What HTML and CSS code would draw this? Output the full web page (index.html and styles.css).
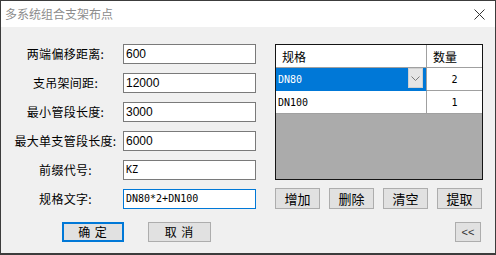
FILE: index.html
```html
<!DOCTYPE html>
<html lang="zh-CN">

<head>
  <meta charset="UTF-8" />
  <title>多系统组合支架布点</title>
  <link rel="stylesheet" href="styles.css">
</head>

<body>
  <div class="janela">
    <div class="titulo">
      <span class="titulo-texto">多系统组合支架布点</span>
      <svg class="fechar" width="11" height="11" viewBox="0 0 11 11">
        <path d="M0.5 0.5 L10.5 10.5 M10.5 0.5 L0.5 10.5" stroke="#333" stroke-width="1" fill="none" />
      </svg>
    </div>

    <div class="conteudo">
      <div class="esquerda">
        <div class="linha">
          <span class="rotulo">两端偏移距离:</span>
          <div class="campo">600</div>
        </div>
        <div class="linha">
          <span class="rotulo">支吊架间距:</span>
          <div class="campo">12000</div>
        </div>
        <div class="linha">
          <span class="rotulo">最小管段长度:</span>
          <div class="campo">3000</div>
        </div>
        <div class="linha">
          <span class="rotulo">最大单支管段长度:</span>
          <div class="campo">6000</div>
        </div>
        <div class="linha">
          <span class="rotulo">前缀代号:</span>
          <div class="campo mono">KZ</div>
        </div>
        <div class="linha">
          <span class="rotulo">规格文字:</span>
          <div class="campo mono ativo">DN80*2+DN100</div>
        </div>

        <div class="acoes">
          <button class="btn padrao">确 定</button>
          <button class="btn">取 消</button>
        </div>
      </div>

      <div class="direita">
        <div class="grade">
          <div class="cab col1">规格</div>
          <div class="cab col2">数量</div>

          <div class="cel col1 selecionada">
            <span>DN80</span>
            <span class="seta">
              <svg width="9" height="5" viewBox="0 0 9 5">
                <path d="M0.5 0.5 L4.5 4.5 L8.5 0.5" stroke="#7a7a7a" stroke-width="1" fill="none" />
              </svg>
            </span>
          </div>
          <div class="cel col2 num">2</div>

          <div class="cel col1">DN100</div>
          <div class="cel col2 num">1</div>

          <div class="vazio"></div>
        </div>

        <div class="botoes">
          <button class="btn">增加</button>
          <button class="btn">删除</button>
          <button class="btn">清空</button>
          <button class="btn">提取</button>
        </div>

        <div class="rodape">
          <button class="btn recolher">&lt;&lt;</button>
        </div>
      </div>
    </div>
  </div>
</body>

</html>
```

FILE: styles.css
```css
* {
  box-sizing: border-box;
}

body {
  margin: 0;
  font-family: "Noto Sans CJK SC", "Microsoft YaHei", sans-serif;
  font-size: 12px;
  color: #000;
  background: #fff;
}

.janela {
  width: 496px;
  height: 255px;
  border: 1px solid #3c3c3c;
  border-bottom-width: 2px;
  background: #f0f0f0;
  display: flex;
  flex-direction: column;
}

.titulo {
  height: 26px;
  background: #fff;
  display: flex;
  align-items: center;
  justify-content: space-between;
  padding: 0 10px 0 4px;
}

.titulo-texto {
  color: #8c8c8c;
  font-size: 12px;
  line-height: 26px;
}

.fechar {
  margin-top: 1px;
}

.conteudo {
  display: flex;
  padding-top: 17px;
}

.esquerda {
  width: 256px;
  padding-left: 7px;
  display: flex;
  flex-direction: column;
  gap: 9px;
}

.linha {
  display: flex;
  height: 20px;
  align-items: center;
}

.rotulo {
  width: 115px;
  text-align: center;
  line-height: 20px;
  letter-spacing: 0.3px;
}

.campo {
  width: 133px;
  height: 20px;
  background: #fff;
  border: 1px solid #7a7a7a;
  padding: 0 2px;
  font-family: "Liberation Sans", sans-serif;
  font-size: 12px;
  line-height: 18px;
}

.mono {
  font-family: "DejaVu Sans Mono", monospace;
  font-size: 10px;
}

.ativo {
  border-color: #0078d7;
}

.acoes {
  display: flex;
  gap: 24px;
  padding-left: 54px;
  margin-top: 4px;
}

.btn {
  height: 20px;
  background: #e1e1e1;
  border: 1px solid #adadad;
  font-family: "Noto Sans CJK SC", sans-serif;
  font-size: 12px;
  padding: 0;
  line-height: 18px;
  color: #000;
}

.acoes .btn {
  width: 63px;
  letter-spacing: 1px;
}

.padrao {
  border: 2px solid #0078d7;
  line-height: 16px;
  width: 62px !important;
}

.direita {
  width: 208px;
  margin-left: 18px;
  display: flex;
  flex-direction: column;
}

.grade {
  height: 136px;
  border: 1px solid #141414;
  background: #ababab;
  display: grid;
  grid-template-columns: 151px 1fr;
  grid-template-rows: 23px 23px 23px 1fr;
}

.cab,
.cel {
  background: #fff;
  border-bottom: 1px solid #a0a0a0;
  display: flex;
  align-items: center;
}

.col1 {
  border-right: 1px solid #a0a0a0;
}

.cab {
  font-size: 12px;
  padding-left: 6px;
}

.cel {
  font-family: "DejaVu Sans Mono", monospace;
  font-size: 10px;
  padding-left: 2px;
}

.num {
  justify-content: center;
  padding-left: 0;
}

.selecionada {
  background: #0078d7;
  color: #fff;
  justify-content: space-between;
  padding-right: 3px;
  border-bottom-color: #0078d7;
}

.seta {
  width: 15px;
  height: 20px;
  background: #e5e5e5;
  border: 1px solid #d0d0d0;
  display: flex;
  align-items: center;
  justify-content: center;
  margin-top: -2px;
}

.vazio {
  grid-column: 1 / 3;
}

.botoes {
  display: flex;
  gap: 9px;
  margin-top: 8px;
}

.botoes .btn {
  width: 45px;
  height: 21px;
  font-size: 13px;
}

.rodape {
  display: flex;
  justify-content: flex-end;
  margin-top: 13px;
  padding-right: 2px;
}

.recolher {
  width: 26px;
  font-family: "Liberation Sans", sans-serif;
  font-size: 11px;
  color: #333;
}
```
